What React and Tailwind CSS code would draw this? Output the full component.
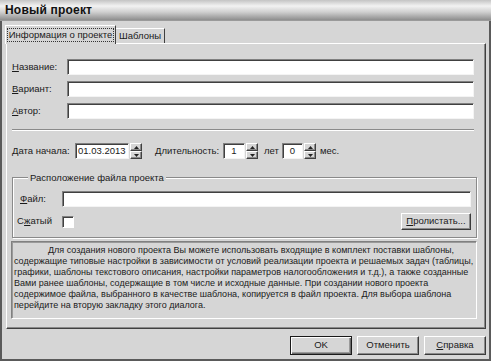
import React from 'react';

const font = { fontFamily: '"Liberation Sans", Arial, sans-serif' };

function Field({ className = '', children }) {
  return (
    <div
      className={`h-[16px] bg-white border border-t-[#808080] border-l-[#808080] border-b-[#f4f4f4] border-r-[#f4f4f4] shadow-[inset_1px_1px_0_#404040] flex items-center text-[9.5px] text-[#1a1a1a] ${className}`}
    >
      {children}
    </div>
  );
}

function Spin() {
  const half =
    'flex-1 flex items-center justify-center bg-[#d6d6d6] border border-t-white border-l-white border-b-[#404040] border-r-[#404040] shadow-[inset_-1px_-1px_0_#8a8a8a]';
  return (
    <div className="ml-[1px] w-[12px] h-[16px] flex flex-col">
      <div className={half}>
        <svg width="5" height="3" viewBox="0 0 5 3"><polygon points="2.5,0 5,3 0,3" fill="#222" /></svg>
      </div>
      <div className={half}>
        <svg width="5" height="3" viewBox="0 0 5 3"><polygon points="0,0 5,0 2.5,3" fill="#222" /></svg>
      </div>
    </div>
  );
}

function Btn({ children, def }) {
  return (
    <div
      className={`w-[62px] h-[19px] flex items-center justify-center text-[9.5px] text-[#1a1a1a] bg-[#d6d6d6] ${
        def
          ? 'border border-[#1a1a1a] shadow-[inset_1px_1px_0_#fff,inset_-1px_-1px_0_#6a6a6a,inset_-2px_-2px_0_#9a9a9a]'
          : 'border border-t-white border-l-white border-b-[#3a3a3a] border-r-[#3a3a3a] shadow-[inset_-1px_-1px_0_#8a8a8a]'
      }`}
    >
      {children}
    </div>
  );
}

const U = ({ children }) => <span className="underline underline-offset-1">{children}</span>;

export default function App() {
  const lines = [
    'содержащие типовые настройки в зависимости от условий реализации проекта и решаемых задач (таблицы,',
    'графики, шаблоны текстового описания, настройки параметров налогообложения и т.д.), а также созданные',
    'Вами ранее шаблоны, содержащие в том числе и исходные данные. При создании нового проекта',
    'содержимое файла, выбранного в качестве шаблона, копируется в файл проекта. Для выбора шаблона',
    'перейдите на вторую закладку этого диалога.',
  ];

  return (
    <div style={font} className="w-[491px] h-[361px] bg-[#d6d6d6] flex flex-col overflow-hidden text-[#1a1a1a]">
      {/* title bar */}
      <div className="h-[21px] shrink-0 flex items-center pl-[5px] bg-[linear-gradient(to_bottom,#c4c4c4,#f2f2f2_30%,#d0d0d0_60%,#8e8e8e)] border-b border-[#9a9a9a]">
        <span className="text-[12px] font-bold text-[#111] tracking-[0.2px]">Новый проект</span>
      </div>

      <div className="flex-1 flex flex-col border-l-2 border-l-[#5a5a5a] border-r-2 border-r-[#5a5a5a] border-b-2 border-b-[#5a5a5a]">
        {/* tabs */}
        <div className="flex items-end ml-[3px] mt-[4px] relative z-10">
          <div className="h-[19px] w-[111px] -mb-[1px] bg-[#d6d6d6] border border-b-0 border-t-white border-l-white border-r-[#404040] flex items-center justify-center">
            <span className="text-[9.5px] leading-[12px] px-[1px] whitespace-nowrap border border-dotted border-[#333]">Информация о проекте</span>
          </div>
          <div className="h-[15px] w-[49px] bg-[#d6d6d6] border border-b-0 border-t-white border-r-[#404040] border-l-0 flex items-center justify-center text-[9.5px] whitespace-nowrap">
            Шаблоны
          </div>
        </div>

        {/* panel */}
        <div className="ml-[4px] w-[480px] h-[286px] border border-t-white border-l-white border-b-[#404040] border-r-[#404040] shadow-[inset_-1px_-1px_0_#8a8a8a] pl-[5px] pr-[11px] flex flex-col text-[9.5px]">
          <div className="mt-[15px] flex flex-col gap-[6px]">
            {[
              ['Н', 'азвание:'],
              ['В', 'ариант:'],
              ['А', 'втор:'],
            ].map(([m, rest]) => (
              <div key={rest} className="flex items-center h-[16px]">
                <span className="w-[55px]">
                  <U>{m}</U>
                  {rest}
                </span>
                <Field className="flex-1" />
              </div>
            ))}
          </div>

          <div className="mt-[10px] h-[2px] border-t border-t-[#8a8a8a] border-b border-b-white" />

          {/* dates */}
          <div className="mt-[12px] flex items-center h-[16px]">
            <span className="w-[63px] whitespace-nowrap">Дата начала:</span>
            <Field className="w-[54px] pl-[2px]">01.03.2013</Field>
            <Spin />
            <span className="ml-[13px] w-[68px] whitespace-nowrap">
              <U>Д</U>лительность:
            </span>
            <Field className="w-[22px] justify-center">1</Field>
            <Spin />
            <span className="ml-[6px] w-[18px]">лет</span>
            <Field className="w-[21px] justify-center">0</Field>
            <Spin />
            <span className="ml-[4px]">мес.</span>
          </div>

          {/* group */}
          <fieldset className="mt-[13px] mr-[-3px] border border-[#8a8a8a] shadow-[1px_1px_0_#fff,inset_1px_1px_0_#fff] pl-[7px] pr-[5px] pb-[7px] min-w-0">
            <legend className="ml-[8px] px-[2px] leading-[11px] bg-[#d6d6d6]">Расположение файла проекта</legend>
            <div className="mt-[8px] flex items-center h-[16px]">
              <span className="w-[42px]">
                <U>Ф</U>айл:
              </span>
              <Field className="flex-1" />
            </div>
            <div className="mt-[6px] flex items-center justify-between h-[17px]">
              <div className="flex items-center -ml-[3px]">
                <span className="w-[45px]">
                  С<U>ж</U>атый
                </span>
                <div className="w-[12px] h-[12px] bg-white border border-t-[#808080] border-l-[#808080] border-b-white border-r-white shadow-[inset_1px_1px_0_#404040]" />
              </div>
              <div className="w-[70px] h-[17px] flex items-center justify-center bg-[#d6d6d6] border border-t-white border-l-white border-b-[#3a3a3a] border-r-[#3a3a3a] shadow-[inset_-1px_-1px_0_#8a8a8a]">
                <U>П</U>ролистать...
              </div>
            </div>
          </fieldset>

          {/* description */}
          <div className="mt-[3px] -ml-[1px] w-[466px] h-[78px] border border-t-[#808080] border-l-[#808080] border-b-white border-r-white shadow-[inset_1px_1px_0_#9a9a9a] pl-[2px] pt-[3px] text-[9px] leading-[11px] text-[#1a1a1a] overflow-hidden">
            <div className="whitespace-nowrap pl-[34px]">
              Для создания нового проекта Вы можете использовать входящие в комплект поставки шаблоны,
            </div>
            {lines.map((l) => (
              <div key={l} className="whitespace-nowrap">
                {l}
              </div>
            ))}
          </div>
        </div>

        {/* buttons */}
        <div className="mt-[7px] flex justify-end gap-[5px] pr-[3px]">
          <Btn def>OK</Btn>
          <Btn>Отменить</Btn>
          <Btn>
            <U>С</U>правка
          </Btn>
        </div>
      </div>
    </div>
  );
}
